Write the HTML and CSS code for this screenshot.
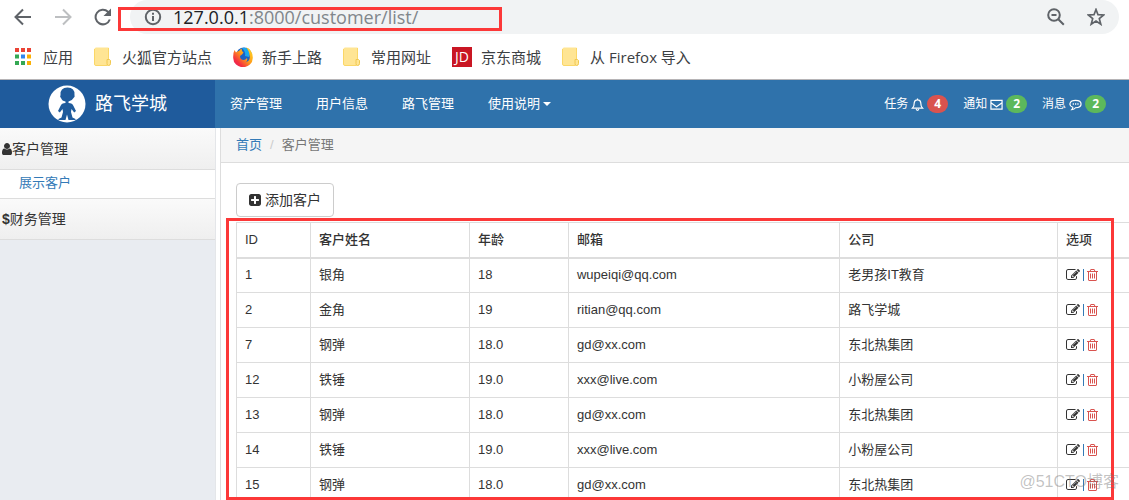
FILE: index.html
```html
<!DOCTYPE html>
<html lang="zh-CN">
<head>
<meta charset="utf-8">
<title>客户管理</title>
<link rel="stylesheet" href="styles.css">
</head>
<body>
<svg class="sprite" aria-hidden="true">
  <symbol id="user" viewBox="256 0 1280 1792"><path d="M1536 1399q0 109-62.500 187t-150.500 78h-854q-88 0-150.500-78t-62.500-187q0-85 8.500-160.500t31.500-152 58.500-131 94-89 134.500-34.500q131 128 313 128t313-128q76 0 134.500 34.500t94 89 58.500 131 31.500 152 8.500 160.500zm-256-887q0 159-112.500 271.500t-271.500 112.500-271.500-112.500-112.500-271.500 112.500-271.500 271.500-112.500 271.500 112.500 112.500 271.500z"/></symbol>
  <symbol id="plus" viewBox="128 128 1536 1536"><path d="M1408 960v-128q0-26-19-45t-45-19h-320v-320q0-26-19-45t-45-19h-128q-26 0-45 19t-19 45v320h-320q-26 0-45 19t-19 45v128q0 26 19 45t45 19h320v320q0 26 19 45t45 19h128q26 0 45-19t19-45v-320h320q26 0 45-19t19-45zm256-544v960q0 119-84.500 203.500t-203.500 84.500h-960q-119 0-203.500-84.500t-84.500-203.500v-960q0-119 84.500-203.500t203.500-84.500h960q119 0 203.500 84.500t84.500 203.500z"/></symbol>
  <symbol id="edit" viewBox="0 0 1792 1792"><path d="M888 1184l116-116-152-152-116 116v56h96v96h56zm440-720q-16-16-33 1l-350 350q-17 17-1 33t33-1l350-350q17-17 1-33zm80 594v190q0 119-84.500 203.500t-203.500 84.500h-832q-119 0-203.500-84.500t-84.500-203.500v-832q0-119 84.500-203.500t203.500-84.500h832q63 0 117 25 15 7 18 23 3 17-9 29l-49 49q-14 14-32 8-23-6-45-6h-832q-66 0-113 47t-47 113v832q0 66 47 113t113 47h832q66 0 113-47t47-113v-126q0-13 9-22l64-64q15-15 35-7t20 29zm-96-738l288 288-672 672h-288v-288zm444 132l-92 92-288-288 92-92q28-28 68-28t68 28l152 152q28 28 28 68t-28 68z"/></symbol>
  <symbol id="trash" viewBox="192 0 1408 1792"><path d="M704 736v576q0 14-9 23t-23 9h-64q-14 0-23-9t-9-23v-576q0-14 9-23t23-9h64q14 0 23 9t9 23zm256 0v576q0 14-9 23t-23 9h-64q-14 0-23-9t-9-23v-576q0-14 9-23t23-9h64q14 0 23 9t9 23zm256 0v576q0 14-9 23t-23 9h-64q-14 0-23-9t-9-23v-576q0-14 9-23t23-9h64q14 0 23 9t9 23zm128 724v-948h-896v948q0 22 7 40.500t14.500 27 10.500 8.500h832q3 0 10.500-8.500t14.500-27 7-40.500zm-672-1076h448l-48-117q-7-9-17-11h-317q-10 2-17 11zm928 32v64q0 14-9 23t-23 9h-96v948q0 83-47 143.500t-113 60.500h-832q-66 0-113-58.500t-47-141.500v-952h-96q-14 0-23-9t-9-23v-64q0-14 9-23t23-9h309l70-167q15-37 54-63t79-26h320q40 0 79 26t54 63l70 167h309q14 0 23 9t9 23z"/></symbol>
  <symbol id="folder" viewBox="0 0 17 19"><path d="M2 .5h12q1 0 1 1v11l1.500 1v3q0 2-2 2H2q-1.500 0-1.500-1.500V2Q.5.500 2 .5z" fill="#ffe594"/><path d="M14.500 1v11.500M13.500 18.500H2q-1.500 0-1.500-1.500V2" fill="none" stroke="#fbd767"/><path d="M13 12.500h2.500l1 1v3q0 2-2 2-1.500 0-1.500-2z" fill="#ffe594" stroke="#f0c850"/></symbol>
</svg>

<div class="browser">
  <div class="toolbar">
    <div class="nav-buttons">
      <button class="tool" aria-label="后退"><svg width="18" height="18" viewBox="0 0 18 18"><path d="M17 9H2M9 1.500L1.500 9 9 16.500"/></svg></button>
      <button class="tool tool-off" aria-label="前进"><svg width="18" height="18" viewBox="0 0 18 18"><path d="M1 9h15M9 1.500L16.500 9 9 16.500"/></svg></button>
      <button class="tool" aria-label="刷新"><svg width="18" height="18" viewBox="0 0 18 18"><path d="M15.800 11.500A7.300 7.300 0 1 1 14 3.800L15.500 5.500"/><path class="solid" d="M17 .5v7.500H9.500z"/></svg></button>
    </div>
    <div class="omnibox">
      <svg class="line" width="18" height="18" viewBox="0 0 18 18"><circle cx="9" cy="9" r="7.200"/><path d="M9 8v5M9 4.800v2"/></svg>
      <div class="url">127.0.0.1<span>:8000/customer/list/</span></div>
      <button class="tool" aria-label="缩放"><svg width="18" height="18" viewBox="0 0 18 18"><circle cx="7" cy="7" r="5.800"/><path d="M4.500 7h5M11.300 11.300l5.500 5.500"/></svg></button>
      <button class="tool" aria-label="收藏"><svg width="18" height="18" viewBox="0 0 18 18"><path class="thin" d="M9 1.500l2 5.200 5.700.3-4.400 3.600 1.500 5.600L9 13l-4.800 3.200 1.500-5.600L1.300 7l5.700-.3z"/></svg></button>
    </div>
  </div>
  <nav class="bookmarks">
    <a href="#"><svg width="17" height="17" viewBox="0 0 17 17"><path fill="#ea4335" d="M0 0h4v4H0zM6 0h4v4H6zM12 0h4v4h-4z"/><path fill="#34a853" d="M0 6.500h4v4H0zM0 13h4v4H0z"/><path fill="#2f86f0" d="M6 6.500h4v4H6z"/><path fill="#34a853" d="M6 13h4v4H6z"/><path fill="#fbb005" d="M12 6.500h4v4h-4zM12 13h4v4h-4z"/></svg>应用</a>
    <a href="#"><svg width="17" height="19"><use href="#folder"/></svg>火狐官方站点</a>
    <a href="#" class="fox"><svg width="20" height="20" viewBox="0 0 20 20"><defs><linearGradient id="fx" x1="1" y1="0" x2="0" y2="1"><stop offset="0" stop-color="#ffe226"/><stop offset=".45" stop-color="#ff9c1a"/><stop offset=".75" stop-color="#f5313f"/><stop offset="1" stop-color="#e3186a"/></linearGradient></defs><circle cx="11" cy="8.500" r="8" fill="#1a62c4"/><path fill="#19a8f0" d="M9 1q6-1 8 4l-1 5-4-1Q13 5 9 1z"/><path fill="url(#fx)" d="M1.500 3l1.500 2.500Q4 4 6 4q1-2 3-2.500Q8 4 10.500 5.500L9 7.500 7 9q0 4 4 4 2-.5 3-2 1 3-1.500 4.500Q18 14 16.500 8 16 3 13 .500q3 .5 4.500 3Q20 7 19.800 11A9.800 9.200 0 0 1 .2 11Q0 6 1.500 3z"/></svg>新手上路</a>
    <a href="#"><svg width="17" height="19"><use href="#folder"/></svg>常用网址</a>
    <a href="#" class="jd"><span class="jd-logo">JD</span>京东商城</a>
    <a href="#"><svg width="17" height="19"><use href="#folder"/></svg>从 Firefox 导入</a>
  </nav>
</div>

<header class="header">
  <div class="brand">
    <svg width="38" height="38" viewBox="0 0 38 38"><circle cx="19" cy="19" r="18.500" fill="#fff"/><path fill="#1f5b9c" d="M12.500 10Q12 2.500 19.500 2.500T26.500 10q.7 2-1 3Q24 16 20.500 16.500v1.500q4 0 5 3l2.500 5-1.800 1.500L23.500 24l-.5 3 1.500 5.500 3 1.500v1h-7L19 29.500 17.500 35h-7v-1l3-1.500L15 27l-.5-3-2.700 3.500L10 26l2.500-5q1-3 5-3v-1.500Q14 16 13 13q-1.500-1-.5-3z"/></svg>
    <span>路飞学城</span>
  </div>
  <nav class="menu">
    <a href="#">资产管理</a><a href="#">用户信息</a><a href="#">路飞管理</a><a href="#">使用说明<i class="caret"></i></a>
  </nav>
  <div class="alerts">
    <a href="#">任务 <svg width="13" height="13" viewBox="0 0 14 14"><path d="M1.500 11q2-2 2-6Q4 2 7 2t3.500 3q0 4 2 6zM7 .5V2M5.500 12q1.500 2.500 3 0"/></svg><b class="badge red">4</b></a>
    <a href="#">通知 <svg width="13" height="13" viewBox="0 0 14 14"><path d="M1 2.500h12v9.500H1zM1 5l6 4.500L13 5"/></svg><b class="badge">2</b></a>
    <a href="#">消息 <svg width="13" height="13" viewBox="0 0 14 14"><path d="M7 2.500c8 0 8 8 0 8-1 1.500-2.500 2-4 2q1.500-1.500 1-2.500c-5-2-3.500-7.500 3-7.500z"/><path d="M4 6.500h1.300M6.500 6.500h1.300M9 6.500h1.300" stroke-width="1.600"/></svg><b class="badge">2</b></a>
  </div>
</header>

<div class="layout">
  <aside class="sidebar">
    <div class="group"><svg width="10" height="14" fill="currentColor"><use href="#user"/></svg>客户管理</div>
    <a class="sub" href="#">展示客户</a>
    <div class="group"><b>$</b>财务管理</div>
  </aside>
  <main class="content">
    <nav class="crumbs"><a href="#">首页</a><span class="slash">/</span><span>客户管理</span></nav>
    <div class="panel">
      <button class="add"><svg width="12" height="12" fill="currentColor"><use href="#plus"/></svg>添加客户</button>
      <table>
        <colgroup><col class="c-id"><col class="c-name"><col class="c-age"><col class="c-mail"><col class="c-firm"><col></colgroup>
        <thead><tr><th>ID</th><th>客户姓名</th><th>年龄</th><th>邮箱</th><th>公司</th><th>选项</th></tr></thead>
        <tbody>
          <tr><td>1</td><td>银角</td><td>18</td><td>wupeiqi@qq.com</td><td>老男孩IT教育</td><td><div class="ops"><a href="#" aria-label="编辑"><svg width="14" height="14"><use href="#edit"/></svg></a><i class="bar"></i><a href="#" class="del" aria-label="删除"><svg width="11" height="14"><use href="#trash"/></svg></a></div></td></tr>
          <tr><td>2</td><td>金角</td><td>19</td><td>ritian@qq.com</td><td>路飞学城</td><td><div class="ops"><a href="#" aria-label="编辑"><svg width="14" height="14"><use href="#edit"/></svg></a><i class="bar"></i><a href="#" class="del" aria-label="删除"><svg width="11" height="14"><use href="#trash"/></svg></a></div></td></tr>
          <tr><td>7</td><td>钢弹</td><td>18.0</td><td>gd@xx.com</td><td>东北热集团</td><td><div class="ops"><a href="#" aria-label="编辑"><svg width="14" height="14"><use href="#edit"/></svg></a><i class="bar"></i><a href="#" class="del" aria-label="删除"><svg width="11" height="14"><use href="#trash"/></svg></a></div></td></tr>
          <tr><td>12</td><td>铁锤</td><td>19.0</td><td>xxx@live.com</td><td>小粉屋公司</td><td><div class="ops"><a href="#" aria-label="编辑"><svg width="14" height="14"><use href="#edit"/></svg></a><i class="bar"></i><a href="#" class="del" aria-label="删除"><svg width="11" height="14"><use href="#trash"/></svg></a></div></td></tr>
          <tr><td>13</td><td>钢弹</td><td>18.0</td><td>gd@xx.com</td><td>东北热集团</td><td><div class="ops"><a href="#" aria-label="编辑"><svg width="14" height="14"><use href="#edit"/></svg></a><i class="bar"></i><a href="#" class="del" aria-label="删除"><svg width="11" height="14"><use href="#trash"/></svg></a></div></td></tr>
          <tr><td>14</td><td>铁锤</td><td>19.0</td><td>xxx@live.com</td><td>小粉屋公司</td><td><div class="ops"><a href="#" aria-label="编辑"><svg width="14" height="14"><use href="#edit"/></svg></a><i class="bar"></i><a href="#" class="del" aria-label="删除"><svg width="11" height="14"><use href="#trash"/></svg></a></div></td></tr>
          <tr><td>15</td><td>钢弹</td><td>18.0</td><td>gd@xx.com</td><td>东北热集团</td><td><div class="ops"><a href="#" aria-label="编辑"><svg width="14" height="14"><use href="#edit"/></svg></a><i class="bar"></i><a href="#" class="del" aria-label="删除"><svg width="11" height="14"><use href="#trash"/></svg></a></div></td></tr>
        </tbody>
      </table>
    </div>
  </main>
</div>
<div class="mark mark-url"></div>
<div class="mark mark-table"></div>
<div class="watermark">@51CTO博客</div>
</body>
</html>
```
FILE: styles.css
```css
* { box-sizing: border-box; }
body {
  margin: 0;
  position: relative;
  height: 100vh;
  overflow: hidden;
  display: flex;
  flex-direction: column;
  background: #fff;
  color: #333;
  font: 13px/18px "Liberation Sans", "Noto Sans CJK SC", sans-serif;
}
a { color: inherit; text-decoration: none; }
button { font: inherit; color: inherit; }
svg { flex: none; }
.sprite { display: none; }

.browser { border-bottom: 1px solid #b6b4b6; }
.toolbar { display: flex; height: 34px; padding-right: 10px; }
.nav-buttons { display: flex; align-items: center; gap: 22px; width: 130px; padding-left: 14px; }
.tool { display: flex; padding: 0; border: 0; background: none; }
.tool svg, .line { fill: none; stroke: #5f6368; stroke-width: 2; }
.tool .solid { fill: #5f6368; stroke: none; }
.tool .thin { stroke-width: 1.700; }
.tool-off svg { stroke: #bdbfc1; }
.omnibox {
  flex: 1;
  display: flex;
  align-items: center;
  gap: 22px;
  padding: 0 14px;
  border-radius: 17px;
  background: #f1f3f4;
}
.omnibox .line { margin-right: -11px; }
.url { flex: 1; font: 18px/24px "Open Sans", sans-serif; color: #202124; }
.url span { color: #80868b; }

.bookmarks { display: flex; align-items: center; gap: 21px; height: 45px; padding-left: 15px; font-size: 15px; color: #3c4043; font-family: "Open Sans", "Noto Sans CJK SC", sans-serif; }
.bookmarks a { display: flex; align-items: center; gap: 11px; white-space: nowrap; }
.bookmarks .fox, .bookmarks .jd { gap: 9px; }
.jd-logo { width: 20px; height: 20px; background: #c91623; color: #fff; font: 14px/20px "Open Sans", sans-serif; text-align: center; }

.header { display: flex; height: 48px; background: #2f72ab; color: #fff; flex: none; }
.brand { width: 215px; display: flex; align-items: center; gap: 9px; padding-left: 48px; background: #1f5b9c; font-size: 18px; }
.menu { display: flex; align-items: center; gap: 34px; padding-left: 15px; }
.menu a { display: flex; align-items: center; }
.caret { margin-left: 3px; border: 4px solid transparent; border-top-color: #fff; border-bottom: 0; }
.alerts { display: flex; align-items: center; gap: 15px; margin-left: auto; padding-right: 23px; font-size: 12px; }
.alerts a { display: flex; align-items: center; gap: 3px; }
.alerts svg { fill: none; stroke: #fff; stroke-width: 1.300; }
.badge { min-width: 20px; padding: 0 7px; border-radius: 9px; background: #5cb85c; font: bold 12px/18px "Open Sans", sans-serif; text-align: center; }
.red { background: #d9534f; }

.layout { flex: 1; display: flex; min-height: 0; }
.sidebar { width: 216px; flex: none; background: #e9ecf1; border-right: 1px solid #e4e6e9; font-size: 14px; }
.group { display: flex; align-items: center; height: 41px; padding: 0 2px; border-bottom: 1px solid #ddd; background: linear-gradient(#fafafa, #efefef); }
.group:first-child { height: 42px; }
.sub { display: block; height: 29px; padding: 0 19px; border-bottom: 1px solid #ddd; background: #fff; color: #337ab7; font-size: 13px; line-height: 26px; }
.content { flex: 1; min-width: 0; margin-left: 4px; border-left: 1px solid #ddd; }
.crumbs { display: flex; gap: 8px; height: 35px; padding: 0 15px; border-bottom: 1px solid #ddd; background: #f5f5f5; color: #777; line-height: 33px; }
.crumbs a { color: #337ab7; }
.crumbs .slash { color: #ccc; }
.panel { padding: 20px 0 0 15px; }
.add { display: flex; align-items: center; gap: 4px; height: 34px; margin-bottom: 5px; padding: 0 12px; border: 1px solid #ccc; border-radius: 4px; background: #fff; font-size: 14px; }

table { width: 100%; table-layout: fixed; border-collapse: collapse; }
.c-id { width: 8.300%; }
.c-name { width: 17.800%; }
.c-age { width: 11.100%; }
.c-mail { width: 30.400%; }
.c-firm { width: 24.400%; }
th, td { height: 35px; padding: 0 8px; border: 1px solid #ddd; text-align: left; white-space: nowrap; }
th:last-child, td:last-child { border-right: 0; }
th { border-bottom-width: 2px; font-weight: 500; }
.ops { display: flex; align-items: center; gap: 3px; }
.ops a { display: flex; }
.ops .del { color: #d9534f; }
.ops svg { fill: currentColor; }
.bar { width: 1px; height: 12px; background: #337ab7; }

.mark { position: absolute; border: 3px solid #fc3838; }
.mark-url { left: 118px; top: 7px; width: 384px; height: 24px; }
.mark-table { left: 226px; right: 15px; top: 218px; bottom: 0; }
.watermark { position: absolute; right: 10px; bottom: 8px; color: rgba(120, 120, 120, .45); font-size: 16px; line-height: 20px; }
```
